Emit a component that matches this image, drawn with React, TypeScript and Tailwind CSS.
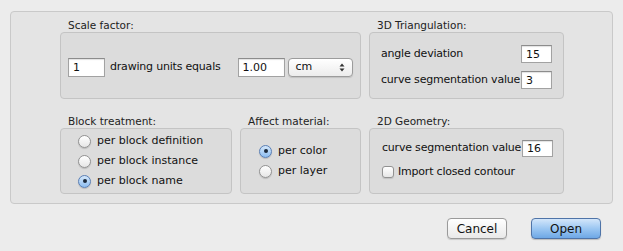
import React from 'react';

const font = { fontFamily: '"DejaVu Sans", "Liberation Sans", sans-serif' };

const GroupLabel: React.FC<{ children: React.ReactNode }> = ({ children }) => (
  <div className="h-[13px] pl-2 text-[10.5px] leading-[13px] text-[#222]">{children}</div>
);

const Box: React.FC<{ className?: string; children: React.ReactNode }> = ({ className = '', children }) => (
  <div className={`rounded-[4px] border border-[#c4c4c4] bg-[#dcdcdc] ${className}`}>{children}</div>
);

const Field: React.FC<{ value: string; className?: string }> = ({ value, className = '' }) => (
  <div
    className={`flex items-center border border-[#a2a2a2] border-t-[#8c8c8c] bg-white pl-[4px] text-[11px] leading-none text-[#111] shadow-[inset_0_1px_1px_rgba(0,0,0,0.12)] ${className}`}
  >
    {value}
  </div>
);

const Radio: React.FC<{ checked?: boolean; label: string }> = ({ checked, label }) => (
  <div className="flex h-5 items-center">
    {checked ? (
      <div className="flex h-[13px] w-[13px] items-center justify-center rounded-full border border-[#5a7fb5] bg-gradient-to-b from-[#d5e8fb] to-[#8dbdf0] shadow-[0_1px_1px_rgba(0,0,0,0.15)]">
        <div className="h-[4px] w-[4px] rounded-full bg-[#1c2a3c]" />
      </div>
    ) : (
      <div className="h-[13px] w-[13px] rounded-full border border-[#929292] bg-gradient-to-b from-white to-[#e6e6e6] shadow-[0_1px_1px_rgba(0,0,0,0.15)]" />
    )}
    <span className="ml-[6px] text-[11px] text-[#111]">{label}</span>
  </div>
);

export default function App() {
  return (
    <div className="h-[251px] w-[623px] bg-[#ececec] px-[10px] pt-[11px]" style={font}>
      <div className="rounded-[4px] border border-[#c9c9c9] bg-[#e4e4e4] pb-[9px] pl-[49px] pt-[7px]">
        {/* row 1 */}
        <div className="flex gap-2">
          <div className="w-[301px]">
            <GroupLabel>Scale factor:</GroupLabel>
            <Box className="flex h-[67px] items-center pl-[7px] pt-[3px]">
              <Field value="1" className="h-[19px] w-[37px]" />
              <span className="ml-[5px] text-[11px] tracking-[-0.2px] text-[#111]">drawing units equals</span>
              <Field value="1.00" className="ml-[17px] h-[19px] w-[47px]" />
              <div className="ml-[3px] flex h-[19px] w-[65px] items-center justify-between rounded-[4px] border border-[#9c9c9c] bg-gradient-to-b from-white to-[#ececec] pl-[7px] pr-[7px] text-[11px] text-[#111] shadow-[0_1px_1px_rgba(0,0,0,0.12)]">
                <span>cm</span>
                <svg width="6" height="9" viewBox="0 0 6 9">
                  <path d="M3 0.5 L5.5 3.5 H0.5 Z" fill="#333" />
                  <path d="M3 8.5 L5.5 5.5 H0.5 Z" fill="#333" />
                </svg>
              </div>
            </Box>
          </div>
          <div className="w-[195px]">
            <GroupLabel>3D Triangulation:</GroupLabel>
            <Box className="flex h-[67px] flex-col justify-center gap-[8px] pl-[11px] pr-[11px] pt-[3px]">
              <div className="flex items-center justify-between">
                <span className="text-[11px] tracking-[-0.2px] text-[#111]">angle deviation</span>
                <Field value="15" className="h-[18px] w-[31px]" />
              </div>
              <div className="flex items-center justify-between">
                <span className="text-[11px] tracking-[-0.2px] text-[#111]">curve segmentation value</span>
                <Field value="3" className="h-[18px] w-[31px]" />
              </div>
            </Box>
          </div>
        </div>

        {/* row 2 */}
        <div className="mt-[16px] flex gap-2">
          <div className="w-[172px]">
            <GroupLabel>Block treatment:</GroupLabel>
            <Box className="flex h-[66px] flex-col justify-center pl-[17px]">
              <Radio label="per block definition" />
              <Radio label="per block instance" />
              <Radio checked label="per block name" />
            </Box>
          </div>
          <div className="w-[121px]">
            <GroupLabel>Affect material:</GroupLabel>
            <Box className="flex h-[66px] flex-col justify-center pl-[18px]">
              <Radio checked label="per color" />
              <Radio label="per layer" />
            </Box>
          </div>
          <div className="w-[195px]">
            <GroupLabel>2D Geometry:</GroupLabel>
            <Box className="flex h-[66px] flex-col pl-[12px] pr-[10px] pt-[11px]">
              <div className="flex items-center justify-between">
                <span className="text-[11px] tracking-[-0.2px] text-[#111]">curve segmentation value</span>
                <Field value="16" className="h-[17px] w-[31px]" />
              </div>
              <div className="mt-[7px] flex items-center">
                <div className="h-[12px] w-[12px] rounded-[3px] border border-[#929292] bg-gradient-to-b from-white to-[#e6e6e6] shadow-[0_1px_1px_rgba(0,0,0,0.12)]" />
                <span className="ml-[4px] text-[11px] tracking-[-0.2px] text-[#111]">Import closed contour</span>
              </div>
            </Box>
          </div>
        </div>
      </div>

      {/* buttons */}
      <div className="mt-[14px] flex justify-end gap-6 pr-[12px]">
        <button className="flex h-[21px] w-[60px] items-center justify-center rounded-[4px] border border-[#9a9a9a] bg-gradient-to-b from-white to-[#e9e9e9] text-[12px] text-[#111] shadow-[0_1px_1px_rgba(0,0,0,0.15)]">
          Cancel
        </button>
        <button className="flex h-[21px] w-[70px] items-center justify-center rounded-[4px] border border-[#4f74a8] bg-gradient-to-b from-[#d3e6fa] via-[#9cc7f2] to-[#6ea8e6] text-[12px] text-[#111] shadow-[0_1px_1px_rgba(0,0,0,0.2)]">
          Open
        </button>
      </div>
    </div>
  );
}
